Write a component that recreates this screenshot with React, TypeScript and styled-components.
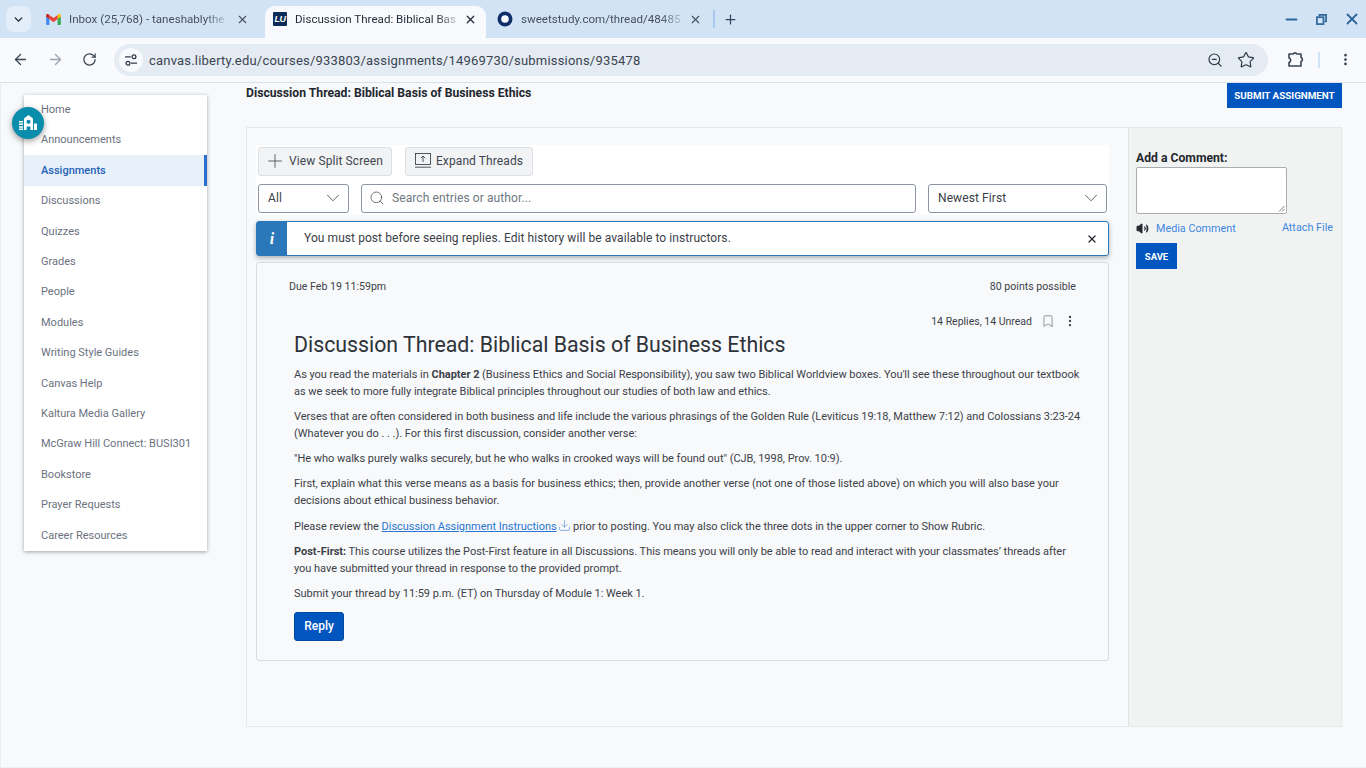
import styled, { createGlobalStyle } from "styled-components";
import {
    ArrowLeft,
    ArrowRight,
    Bookmark,
    ChevronDown,
    Download,
    EllipsisVertical,
    Minus,
    Plus,
    RotateCw,
    Search,
    Star,
    Volume2,
    X,
    ZoomOut,
} from "lucide-react";

const GlobalStyle = createGlobalStyle`
    html, body {
        margin: 0;
        padding: 0;
        height: 768px;
        overflow: hidden;
        background: #f8f9fb;
        font-family: Roboto, "Liberation Sans", sans-serif;
    }
`;

const Screen = styled.div`
    width: 1366px;
    height: 768px;
    display: flex;
    flex-direction: column;
    overflow: hidden;
    position: relative;
    background: #f8f9fb;
`;

const TabStrip = styled.div`
    height: 38px;
    flex: none;
    box-sizing: border-box;
    padding: 6px 0 0 6px;
    display: flex;
    align-items: flex-start;
    background: #d3e3f6;
`;

const TabSearch = styled.div`
    width: 25px;
    height: 26px;
    border-radius: 8px;
    background: #e4eefa;
    color: #1f2a38;
    display: flex;
    align-items: center;
    justify-content: center;
    margin-right: 7px;
`;

const Tab = styled.div<{ $active?: boolean; $width: number; $left: number; $right: number }>`
    width: ${(p) => p.$width}px;
    height: 32px;
    flex: none;
    box-sizing: border-box;
    display: flex;
    align-items: center;
    padding: 0 ${(p) => p.$right}px 6px ${(p) => p.$left}px;
    gap: 8px;
    border-radius: 10px 10px 0 0;
    background: ${(p) => (p.$active ? "#f8fafd" : "transparent")};
    color: ${(p) => (p.$active ? "#1f2a38" : "#46505c")};
    font-size: 11.6px;
`;

const TabTitle = styled.span`
    margin-right: auto;
    white-space: nowrap;
    -webkit-mask-image: linear-gradient(90deg, #000 88%, rgba(0, 0, 0, 0.25));
    mask-image: linear-gradient(90deg, #000 88%, rgba(0, 0, 0, 0.25));
`;

const TabClose = styled.div`
    display: flex;
    flex: none;
`;

const TabGap = styled.div`
    width: 2px;
    height: 18px;
    margin: 4px 8px 0 2px;
    background: #a8c9f0;
`;

const NewTab = styled.div`
    height: 26px;
    display: flex;
    align-items: center;
    color: #33465c;
`;

const WindowControls = styled.div`
    margin-left: auto;
    height: 26px;
    display: flex;
    align-items: center;
    gap: 16px;
    padding-right: 5px;
    color: #2f6699;
`;

const Toolbar = styled.div`
    height: 45px;
    flex: none;
    box-sizing: border-box;
    border-bottom: 1px solid #d8e0ea;
    border-radius: 10px 10px 0 0;
    background: #f8fafd;
    display: flex;
    align-items: center;
    padding: 0 12px 1px 12px;
    color: #3a4450;
`;

const NavIcon = styled.div<{ $dim?: boolean }>`
    width: 35px;
    display: flex;
    justify-content: flex-start;
    color: ${(p) => (p.$dim ? "#9aa3ad" : "#3a4450")};
`;

const Omnibox = styled.div`
    width: 1154px;
    height: 32px;
    margin-left: -3px;
    border-radius: 16px;
    background: #e5ebf3;
    display: flex;
    align-items: center;
    padding: 0 12px 0 5px;
    box-sizing: border-box;
    color: #2f3a46;
`;

const SiteChip = styled.div`
    width: 24px;
    height: 24px;
    border-radius: 50%;
    background: #f8fafd;
    display: flex;
    align-items: center;
    justify-content: center;
    margin-right: 6px;
`;

const Url = styled.span`
    flex: 1;
    padding-top: 1px;
    font-size: 13px;
    letter-spacing: 0.2px;
    color: #3a4552;
`;

const OmniIcons = styled.div`
    display: flex;
    align-items: center;
    gap: 14px;
    padding-right: 1px;
`;

const ToolbarEnd = styled.div`
    display: flex;
    align-items: center;
    margin-left: 19px;
    color: #3a4450;
`;

const ToolbarDivider = styled.div`
    width: 2px;
    height: 16px;
    background: #d3e3f6;
    margin: 0 18px 0 14px;
`;

const Page = styled.div`
    flex: 1;
    display: flex;
    align-items: flex-start;
    padding: 12px 23px 0 23px;
    box-sizing: border-box;
    gap: 39px;
    min-height: 0;
    border-left: 1px solid #eceef1;
    border-bottom: 1px solid #eceef1;
`;

const CourseNav = styled.nav`
    width: 183px;
    height: 456px;
    flex: none;
    background: #ffffff;
    box-shadow: 0 1px 4px rgba(0, 0, 0, 0.35);
    display: flex;
    flex-direction: column;
`;

const NavItem = styled.a<{ $active?: boolean }>`
    height: 30.4px;
    flex: none;
    box-sizing: border-box;
    padding-left: 17px;
    display: flex;
    align-items: center;
    font-size: 11px;
    font-weight: ${(p) => (p.$active ? 500 : 400)};
    color: ${(p) => (p.$active ? "#1f62b8" : "#6b7280")};
    background: ${(p) => (p.$active ? "#e8f0fa" : "transparent")};
    border-right: 3px solid ${(p) => (p.$active ? "#2a6fd0" : "transparent")};

    &:first-child {
        margin-top: -0.6px;
    }
`;

const FloatBadge = styled.div`
    position: absolute;
    left: 12px;
    top: 107px;
    width: 32px;
    height: 32px;
    border-radius: 50%;
    background: #0a8cab;
    box-shadow: 0 2px 6px rgba(0, 0, 0, 0.4);
    display: flex;
    align-items: center;
    justify-content: center;
`;

const Content = styled.div`
    width: 1096px;
    margin-top: -12px;
    flex: none;
    display: flex;
    flex-direction: column;
    height: 644px;
`;

const TitleRow = styled.div`
    height: 44px;
    flex: none;
    display: flex;
    justify-content: space-between;
    align-items: flex-start;
`;

const PageTitle = styled.h2`
    margin: 3px 0 0;
    font-size: 12.2px;
    line-height: 14px;
    font-weight: 700;
    color: #23272e;
`;

const SubmitButton = styled.button`
    width: 115px;
    height: 25px;
    border: 0;
    padding: 0;
    background: #0055bf;
    color: #fff;
    font: 700 9.8px Roboto, sans-serif;
`;

const Frame = styled.div`
    flex: 1;
    display: flex;
    border: 1px solid #e6e8ec;
    min-height: 0;
`;

const Main = styled.div`
    width: 881px;
    flex: none;
    box-sizing: border-box;
    padding: 17px 19px 0 9px;
    display: flex;
    flex-direction: column;
`;

const ButtonRow = styled.div`
    height: 39px;
    flex: none;
    display: flex;
    gap: 13px;
    padding: 2px 0 0 2px;
    box-sizing: border-box;
    background: #ffffff;
    align-items: flex-start;
`;

const GhostButton = styled.button<{ $tight?: boolean }>`
    height: 29px;
    box-sizing: border-box;
    border: 1px solid #dcdfe3;
    border-radius: 3px;
    background: #f1f3f4;
    color: #3f4650;
    display: flex;
    align-items: center;
    gap: ${(p) => (p.$tight ? 3 : 5)}px;
    padding: 0 ${(p) => (p.$tight ? 8 : 9)}px 2px ${(p) => (p.$tight ? 5 : 9)}px;
    font: 400 12px Roboto, sans-serif;
    letter-spacing: 0.1px;
`;

const FilterRow = styled.div`
    display: flex;
    flex: none;
    gap: 12px;
    background: #ffffff;
    padding: 0 2px 2px 2px;
`;

const SelectBox = styled.div<{ $width: number }>`
    width: ${(p) => p.$width}px;
    height: 29px;
    flex: none;
    box-sizing: border-box;
    border: 1px solid #8b95a3;
    border-radius: 3px;
    background: #fff;
    display: flex;
    align-items: center;
    justify-content: space-between;
    padding: 0 4px 2px 9px;
    color: #3a4048;
    font-size: 12px;
    letter-spacing: 0.1px;
`;

const SearchBox = styled.div`
    flex: 1;
    height: 29px;
    box-sizing: border-box;
    border: 1px solid #8b95a3;
    border-radius: 3px;
    background: #fff;
    display: flex;
    align-items: center;
    gap: 7px;
    padding: 0 7px 2px;
    color: #6f7883;
    font-size: 12px;
    letter-spacing: 0.1px;
`;

const Alert = styled.div`
    height: 35px;
    flex: none;
    box-sizing: border-box;
    margin-top: 6px;
    border: 1px solid #2a77b9;
    border-radius: 3px;
    background: #fff;
    box-shadow: 0 2px 5px rgba(0, 0, 0, 0.3);
    display: flex;
    align-items: center;
    color: #3a4048;
    font-size: 12px;
    letter-spacing: 0.07px;
`;

const AlertIcon = styled.div`
    width: 30px;
    height: 100%;
    background: #2a77b9;
    color: #fff;
    font: italic 700 16px "Liberation Serif", serif;
    display: flex;
    align-items: center;
    justify-content: center;
    margin-right: 17px;
`;

const AlertText = styled.span`
    flex: 1;
    padding-bottom: 2px;
`;

const AlertClose = styled.div`
    margin-right: 10px;
    display: flex;
    color: #23272e;
`;

const Thread = styled.div`
    height: 399px;
    flex: none;
    margin-top: 6px;
    box-sizing: border-box;
    border: 1px solid #d9dce1;
    border-radius: 3px;
    padding: 17px 32px 0 37px;
    color: #3c4148;
`;

const MetaRow = styled.div`
    display: flex;
    justify-content: space-between;
    margin-left: -5px;
    font-size: 10.6px;
    line-height: 13px;
`;

const RepliesRow = styled.div`
    display: flex;
    justify-content: flex-end;
    align-items: center;
    gap: 8px;
    margin-top: 21px;
    margin-right: -1px;
    font-size: 10.5px;
    height: 14px;
`;

const RepliesCount = styled.span`
    margin-right: 1px;
`;

const ThreadTitle = styled.h1`
    margin: 4px 0 0;
    padding-bottom: 0.5px;
    font-size: 21.3px;
    line-height: 26px;
    font-weight: 400;
    color: #2d3238;
`;

const Para = styled.p`
    margin: 8.5px 0 0;
    font-size: 11px;
    line-height: 16.8px;
    letter-spacing: -0.03px;
    white-space: nowrap;
`;

const DocLink = styled.a`
    color: #2a75cf;
    text-decoration: underline;
`;

const DownloadMark = styled(Download)`
    vertical-align: -2px;
    margin: 0 -1px;
`;

const ReplyButton = styled.button`
    display: block;
    width: 50px;
    height: 29px;
    margin-top: 9px;
    border: 1px solid #004a9f;
    border-radius: 3px;
    background: #0055bf;
    color: #fff;
    font: 500 12px Roboto, sans-serif;
`;

const Side = styled.aside`
    flex: 1;
    background: #f1f3f3;
    border-left: 1px solid #e0e3e6;
    padding: 23px 8px 0 7px;
`;

const CommentLabel = styled.div`
    font-size: 12.2px;
    line-height: 14px;
    font-weight: 700;
    color: #23272e;
`;

const CommentBox = styled.div`
    width: 151px;
    height: 47px;
    box-sizing: border-box;
    margin-top: 2px;
    border: 1px solid #a9adb2;
    border-radius: 2px;
    background: #fff;
    position: relative;
`;

const Grip = styled.svg`
    position: absolute;
    right: 1px;
    bottom: 1px;
`;

const LinksRow = styled.div`
    display: flex;
    align-items: flex-start;
    margin-top: 7px;
    font-size: 10.8px;
    color: #3e87df;
    height: 20px;
`;

const MediaLink = styled.span`
    display: flex;
    align-items: center;
    gap: 7px;
    margin-top: 1px;
    color: #3e87df;
`;

const AttachLink = styled.span`
    margin-left: auto;
`;

const SaveButton = styled.button`
    display: block;
    width: 41px;
    height: 26px;
    margin-top: 2px;
    border: 0;
    padding: 0;
    background: #0055bf;
    color: #fff;
    font: 700 9.5px Roboto, sans-serif;
`;

const LibertyMark = styled.div`
    width: 14px;
    height: 14px;
    flex: none;
    border-radius: 1px;
    background: #0d2b57;
    color: #fff;
    font: italic 700 9px/14px "Liberation Sans", sans-serif;
    text-align: center;
    letter-spacing: -0.5px;
`;

const MENU = [
    "Home",
    "Announcements",
    "Assignments",
    "Discussions",
    "Quizzes",
    "Grades",
    "People",
    "Modules",
    "Writing Style Guides",
    "Canvas Help",
    "Kaltura Media Gallery",
    "McGraw Hill Connect: BUSI301",
    "Bookstore",
    "Prayer Requests",
    "Career Resources",
];

const GmailIcon = () => (
    <svg width="15" height="11" viewBox="0 0 16 12" style={{ flex: "none" }}>
        <path d="M0 2v9a1 1 0 0 0 1 1h2.5V5z" fill="#4285f4" />
        <path d="M16 2v9a1 1 0 0 1-1 1h-2.5V5z" fill="#34a853" />
        <path d="M12.5 1v4.5L16 3V1.5C16 .2 14.5-.4 13.6.4z" fill="#fbbc04" />
        <path d="M3.5 5.5V1L8 4.4 12.5 1v4.5L8 8.9z" fill="#ea4335" />
        <path d="M0 1.5V3l3.5 2.5V1L2.4.4C1.5-.4 0 .2 0 1.5z" fill="#c5221f" />
    </svg>
);

const SweetStudyIcon = () => (
    <svg width="16" height="16" viewBox="0 0 16 16" style={{ flex: "none" }}>
        <circle cx="8" cy="8" r="7.5" fill="#0f2f6b" />
        <circle cx="8" cy="8" r="3.8" fill="#f8fafd" />
        <path d="M0 0h3L0 3zM16 0h-3l3 3zM0 16h3l-3-3zM16 16h-3l3-3z" fill="#d3e3f6" />
    </svg>
);

const RestoreIcon = () => (
    <svg width="11" height="11" viewBox="0 0 11 11" fill="none" stroke="currentColor" strokeWidth="1.7">
        <path d="M3.5 2.5V.9h6.6v6.6H8.5" />
        <rect x="0.9" y="3.2" width="6.6" height="6.9" />
    </svg>
);

const TuneIcon = () => (
    <svg width="14" height="12" viewBox="0 0 14 12" fill="none" stroke="#2f3a46" strokeWidth="1.3">
        <path d="M1 2.8h5.8M7 9.2h6" />
        <circle cx="10" cy="2.8" r="1.9" />
        <circle cx="4" cy="9.2" r="1.9" />
    </svg>
);

const ExtensionIcon = () => (
    <svg width="17" height="17" viewBox="0 0 17 17" fill="none" stroke="currentColor" strokeWidth="1.6" strokeLinejoin="round">
        <path d="M2 3h4.2a2 2 0 0 1 3.6 0H14v3.6a2.1 2.1 0 0 1 0 4V15H2v-3.4a2.4 2.4 0 0 0 0-4.6z" />
    </svg>
);

const ExpandIcon = () => (
    <svg width="16" height="15" viewBox="0 0 16 15" fill="none" stroke="#3f4650" strokeWidth="0.9">
        <rect x="0.5" y="0.5" width="15" height="11" />
        <path d="M8 9V3M5.8 5.2 8 3l2.2 2.2M0 14.2h16" />
    </svg>
);

const CampusIcon = () => (
    <svg width="20" height="18" viewBox="0 0 20 18" fill="#fff">
        <path d="M6 4.5 10.5 1 15 4.5V16h-2.6v-3.6H8.6V16H6zm4.5 1.2a2.1 2.1 0 1 0 0 4.2 2.1 2.1 0 0 0 0-4.2z" fillRule="evenodd" />
        <path d="M1 7h4v1.5H1zM1 9.6h4v1.5H1zM1 12.2h4v1.5H1zM1 14.6h4V16H1zM16 9.5h3V16h-3z" />
    </svg>
);

const App = () => {
    return (
        <Screen>
            <GlobalStyle />
            <TabStrip>
                <TabSearch>
                    <ChevronDown size={13} strokeWidth={2.6} />
                </TabSearch>
                <Tab $width={227} $left={8} $right={16}>
                    <GmailIcon />
                    <TabTitle>Inbox (25,768) - taneshablythe</TabTitle>
                    <TabClose>
                        <X size={13} strokeWidth={2} />
                    </TabClose>
                </Tab>
                <Tab $active $width={221} $left={8} $right={11}>
                    <LibertyMark>LU</LibertyMark>
                    <TabTitle>Discussion Thread: Biblical Bas</TabTitle>
                    <TabClose>
                        <X size={13} strokeWidth={2.4} />
                    </TabClose>
                </Tab>
                <Tab $width={225} $left={11} $right={9}>
                    <SweetStudyIcon />
                    <TabTitle>sweetstudy.com/thread/48485</TabTitle>
                    <TabClose>
                        <X size={13} strokeWidth={2} />
                    </TabClose>
                </Tab>
                <TabGap />
                <NewTab>
                    <Plus size={15} strokeWidth={2} />
                </NewTab>
                <WindowControls>
                    <Minus size={17} strokeWidth={2.6} />
                    <RestoreIcon />
                    <X size={18} strokeWidth={2.4} />
                </WindowControls>
            </TabStrip>
            <Toolbar>
                <NavIcon>
                    <ArrowLeft size={17} strokeWidth={1.8} />
                </NavIcon>
                <NavIcon $dim>
                    <ArrowRight size={17} strokeWidth={1.8} />
                </NavIcon>
                <NavIcon>
                    <RotateCw size={15} strokeWidth={2} />
                </NavIcon>
                <Omnibox>
                    <SiteChip>
                        <TuneIcon />
                    </SiteChip>
                    <Url>canvas.liberty.edu/courses/933803/assignments/14969730/submissions/935478</Url>
                    <OmniIcons>
                        <ZoomOut size={16} strokeWidth={1.8} />
                        <Star size={18} strokeWidth={1.6} />
                    </OmniIcons>
                </Omnibox>
                <ToolbarEnd>
                    <ExtensionIcon />
                    <ToolbarDivider />
                    <EllipsisVertical size={15} strokeWidth={2.4} />
                </ToolbarEnd>
            </Toolbar>
            <Page>
                <CourseNav>
                    {MENU.map((item) => (
                        <NavItem key={item} $active={item === "Assignments"}>
                            {item}
                        </NavItem>
                    ))}
                </CourseNav>
                <Content>
                    <TitleRow>
                        <PageTitle>Discussion Thread: Biblical Basis of Business Ethics</PageTitle>
                        <SubmitButton>SUBMIT ASSIGNMENT</SubmitButton>
                    </TitleRow>
                    <Frame>
                        <Main>
                            <ButtonRow>
                                <GhostButton $tight>
                                    <Plus size={22} strokeWidth={0.9} />
                                    View Split Screen
                                </GhostButton>
                                <GhostButton>
                                    <ExpandIcon />
                                    Expand Threads
                                </GhostButton>
                            </ButtonRow>
                            <FilterRow>
                                <SelectBox $width={91}>
                                    All
                                    <ChevronDown size={22} strokeWidth={0.9} />
                                </SelectBox>
                                <SearchBox>
                                    <Search size={16} strokeWidth={1.1} color="#3f4650" />
                                    Search entries or author...
                                </SearchBox>
                                <SelectBox $width={179}>
                                    Newest First
                                    <ChevronDown size={22} strokeWidth={0.9} />
                                </SelectBox>
                            </FilterRow>
                            <Alert>
                                <AlertIcon>i</AlertIcon>
                                <AlertText>You must post before seeing replies. Edit history will be available to instructors.</AlertText>
                                <AlertClose>
                                    <X size={12} strokeWidth={2.6} />
                                </AlertClose>
                            </Alert>
                            <Thread>
                                <MetaRow>
                                    <span>Due Feb 19 11:59pm</span>
                                    <span>80 points possible</span>
                                </MetaRow>
                                <RepliesRow>
                                    <RepliesCount>14 Replies, 14 Unread</RepliesCount>
                                    <Bookmark size={14} strokeWidth={0.9} />
                                    <EllipsisVertical size={14} strokeWidth={2} />
                                </RepliesRow>
                                <ThreadTitle>Discussion Thread: Biblical Basis of Business Ethics</ThreadTitle>
                                <Para>
                                    As you read the materials in <b>Chapter 2</b> (Business Ethics and Social Responsibility), you saw two Biblical Worldview boxes. You'll see these throughout our textbook
                                    <br />
                                    as we seek to more fully integrate Biblical principles throughout our studies of both law and ethics.
                                </Para>
                                <Para>
                                    Verses that are often considered in both business and life include the various phrasings of the Golden Rule (Leviticus 19:18, Matthew 7:12) and Colossians 3:23-24
                                    <br />
                                    (Whatever you do . . .). For this first discussion, consider another verse:
                                </Para>
                                <Para>"He who walks purely walks securely, but he who walks in crooked ways will be found out" (CJB, 1998, Prov. 10:9).</Para>
                                <Para>
                                    First, explain what this verse means as a basis for business ethics; then, provide another verse (not one of those listed above) on which you will also base your
                                    <br />
                                    decisions about ethical business behavior.
                                </Para>
                                <Para>
                                    Please review the <DocLink>Discussion Assignment Instructions</DocLink>{" "}
                                    <DownloadMark size={13} strokeWidth={1} color="#2a75cf" /> prior to posting. You may also click the three dots in the upper corner to Show Rubric.
                                </Para>
                                <Para>
                                    <b>Post-First:</b> This course utilizes the Post-First feature in all Discussions. This means you will only be able to read and interact with your classmates’ threads after
                                    <br />
                                    you have submitted your thread in response to the provided prompt.
                                </Para>
                                <Para>Submit your thread by 11:59 p.m. (ET) on Thursday of Module 1: Week 1.</Para>
                                <ReplyButton>Reply</ReplyButton>
                            </Thread>
                        </Main>
                        <Side>
                            <CommentLabel>Add a Comment:</CommentLabel>
                            <CommentBox>
                                <Grip width="7" height="7" viewBox="0 0 7 7" stroke="#555" strokeWidth="0.8">
                                    <path d="M6.5 1 1 6.5M6.5 4 4 6.5" />
                                </Grip>
                            </CommentBox>
                            <LinksRow>
                                <MediaLink>
                                    <Volume2 size={13} color="#23272e" fill="#23272e" />
                                    Media Comment
                                </MediaLink>
                                <AttachLink>Attach File</AttachLink>
                            </LinksRow>
                            <SaveButton>SAVE</SaveButton>
                        </Side>
                    </Frame>
                </Content>
            </Page>
            <FloatBadge>
                <CampusIcon />
            </FloatBadge>
        </Screen>
    );
};

export default App;
